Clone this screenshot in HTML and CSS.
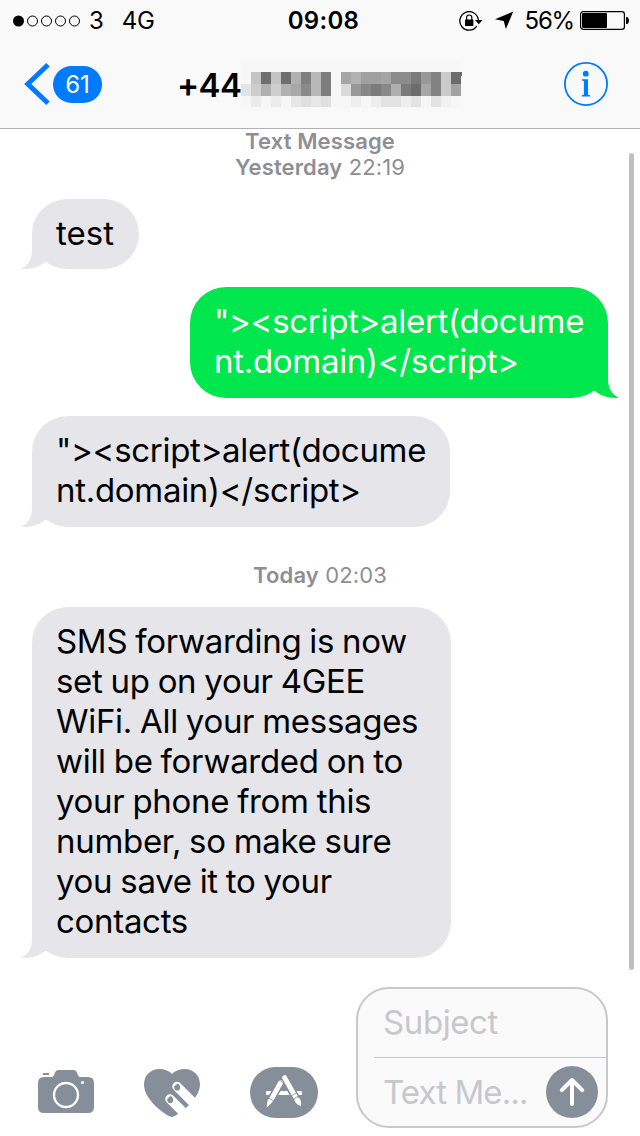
FILE: index.html
```
<!DOCTYPE html>
<html lang="en">
<head>
<meta charset="utf-8">
<title>Messages</title>
<link rel="stylesheet" href="styles.css">
</head>
<body>
<div class="phone">
  <header class="header">
    <div class="status">
      <div class="status-left">
        <svg class="signal" width="68" height="12" viewBox="0 0 68 12"><circle cx="5.5" cy="6" r="5.5"/><g fill="none" stroke="#000" stroke-width="1"><circle cx="19.5" cy="6" r="5"/><circle cx="33.5" cy="6" r="5"/><circle cx="47.5" cy="6" r="5"/><circle cx="61.5" cy="6" r="5"/></g></svg>
        <span class="carrier">3</span><span class="network">4G</span>
      </div>
      <div class="clock">09:08</div>
      <div class="status-right">
        <svg class="lock" width="24" height="20" viewBox="0 0 24 20"><path d="M17.800 15.200A9.300 9.300 0 1 1 19.400 9" fill="none" stroke="#000" stroke-width="1.300"/><path d="M16 9h7.500l-3.700 4.200z"/><rect x="6" y="8.500" width="8.400" height="6.500" rx=".6"/><path d="M7.600 9V6.600a2.600 2.600 0 0 1 5.200 0V9" fill="none" stroke="#000" stroke-width="1.200"/></svg>
        <svg class="location" width="19" height="19" viewBox="0 0 19 19"><path d="M18.300.500 0 8.300l8.700 1.600L10.900 18z"/></svg>
        <span class="percent">56%</span>
        <svg class="battery" width="49" height="20" viewBox="0 0 49 20"><rect x=".6" y=".6" width="43.800" height="17.800" rx="2.600" fill="none" stroke="#000" stroke-width="1.200"/><rect x="2" y="2" width="25" height="15" rx="1"/><path d="M46 6h1.200q1.800 1 1.800 3.500T47.200 13H46z"/></svg>
      </div>
    </div>
    <div class="nav">
      <div class="back">
        <svg width="26" height="42" viewBox="0 0 26 42"><path d="M24 1.800 3.800 21 24 40.200" fill="none" stroke="#007aff" stroke-width="5"/></svg>
        <span class="badge">61</span>
      </div>
      <div class="contact">
        <span class="number">+44</span>
        <svg class="mosaic" width="222" height="48" viewBox="0 0 222 48" shape-rendering="crispEdges">
          <path fill="#f7f7f7" d="M0 0h220v48H0z"/>
          <path fill="#e4e4e4" d="M0 24h10v12H0z"/>
          <path fill="#c4c4c4" d="M10 12h10v12H10zM30 12h10v12H30z"/><path fill="#cecece" d="M10 24h10v12H10zM30 24h10v12H30z"/><path fill="#ececec" d="M10 36h10v11H10zM30 36h10v11H30z"/>
          <path fill="#6e6e6e" d="M20 12h10v12H20zM40 12h10v12H40z"/><path fill="#b1b1b1" d="M20 24h10v12H20zM40 24h10v12H40zM50 12h10v12H50z"/>
          <path fill="#a8a8a8" d="M50 24h10v12H50z"/><path fill="#e7e7e7" d="M50 36h10v11H50zM70 36h10v11H70z"/>
          <path fill="#7f7f7f" d="M60 12h10v12H60z"/><path fill="#8a8a8a" d="M60 24h10v12H60z"/><path fill="#e0e0e0" d="M60 36h10v11H60zM80 36h10v11H80z"/>
          <path fill="#b8b8b8" d="M70 12h10v24H70z"/><path fill="#7d7d7d" d="M80 12h10v24H80z"/>
          <path fill="#a6a6a6" d="M100 12h10v12h-10z"/><path fill="#dadada" d="M100 24h10v12h-10z"/>
          <path fill="#b2b2b2" d="M110 12h10v12h-10z"/><path fill="#989898" d="M110 24h10v12h-10z"/><path fill="#eee" d="M110 36h10v11h-10zM130 36h10v11h-10zM160 36h10v11h-10z"/>
          <path fill="#a0a0a0" d="M120 12h20v12h-20z"/><path fill="#888" d="M120 24h10v12h-10zM140 24h10v12h-10z"/><path fill="#7b7b7b" d="M130 24h10v12h-10z"/>
          <path fill="#a5a5a5" d="M140 12h10v12h-10z"/><path fill="#e3e3e3" d="M140 36h20v11h-20zM170 36h10v11h-10zM190 36h10v11h-10z"/>
          <path fill="#8c8c8c" d="M150 12h20v12h-20z"/><path fill="#aeaeae" d="M150 24h10v12h-10z"/><path fill="#7a7a7a" d="M160 24h10v12h-10zM170 12h10v12h-10z"/>
          <path fill="#6c6c6c" d="M170 24h10v12h-10z"/><path fill="#989898" d="M180 12h10v12h-10z"/><path fill="#a6a6a6" d="M180 24h10v12h-10z"/>
          <path fill="#828282" d="M190 12h10v24h-10z"/><path fill="#cbcbcb" d="M200 12h10v24h-10z"/><path fill="#f1f1f1" d="M200 36h10v11h-10z"/>
          <path fill="#6c6c6c" d="M210 12h10v12h-10zM220 12h1v4h-1z"/><path fill="#a2a2a2" d="M210 24h10v12h-10z"/>
        </svg>
      </div>
      <svg class="info" width="44" height="44" viewBox="0 0 44 44"><circle cx="22" cy="22" r="21.100" fill="none" stroke="#007aff" stroke-width="1.800"/><g fill="#007aff"><circle cx="21.800" cy="11.700" r="2.900"/><path d="M17.900 17.200H24V32.800l2.200.500v1.200H17.700v-1.200l2.200-.500V18.900l-2-.500z"/></g></svg>
    </div>
  </header>

  <main class="thread">
    <div class="stamp stamp-first"><b class="label">Text Message</b><span class="when"><b>Yesterday</b> 22:19</span></div>
    <div class="bubble received short">test<svg class="tail" width="44" height="36" viewBox="0 0 44 36"><path d="M11 0v16C11 26 8 32 0 35.800 10 36.500 18 34 24 29L44 28V0z"/></svg></div>
    <div class="bubble sent code">"&gt;&lt;script&gt;alert(docume<br>nt.domain)&lt;/script&gt;<svg class="tail" width="44" height="36" viewBox="0 0 44 36"><path d="M11 0v16C11 26 8 32 0 35.800 10 36.500 18 34 24 29L44 28V0z"/></svg></div>
    <div class="bubble received code">"&gt;&lt;script&gt;alert(docume<br>nt.domain)&lt;/script&gt;<svg class="tail" width="44" height="36" viewBox="0 0 44 36"><path d="M11 0v16C11 26 8 32 0 35.800 10 36.500 18 34 24 29L44 28V0z"/></svg></div>
    <div class="stamp stamp-today"><span class="when"><b>Today</b> 02:03</span></div>
    <div class="bubble received long">SMS forwarding is now<br>set up on your 4GEE<br>WiFi. All your messages<br>will be forwarded on to<br>your phone from this<br>number, so make sure<br>you save it to your<br>contacts<svg class="tail" width="44" height="36" viewBox="0 0 44 36"><path d="M11 0v16C11 26 8 32 0 35.800 10 36.500 18 34 24 29L44 28V0z"/></svg></div>
    <div class="scrollbar"></div>
  </main>

  <footer class="composer">
    <div class="tools">
      <svg class="camera" width="56" height="44" viewBox="0 0 56 44"><path fill="#858e99" d="M5 3h6v2H5zM6 7h8c2 0 2.500-4 4-6q1-1 3-1h14q2 0 3 1c1.500 2 2 6 4 6h8q6 0 6 6v24q0 6-6 6H6q-6 0-6-6V13q0-6 6-6z"/><circle cx="28" cy="25" r="12" fill="none" stroke="#fff" stroke-width="2.400"/><circle cx="44.500" cy="12.500" r="1.600" fill="#fff"/></svg>
      <svg class="heart" width="56" height="49" viewBox="0 0 56 49"><path fill="#858e99" d="M28 5C31 1.500 36 0 40.500 0 50 0 56 7 56 15.500 56 31 32 48 28 48S0 32 0 15.500C0 7 6 0 15.500 0 20 0 25 1.500 28 5z"/><path d="m33 17.500 25 25M26 30l25 25" stroke="#fff" stroke-width="9.500" stroke-linecap="round"/><path fill="#858e99" d="m30.300 17.200 3.200-2.800q3 1.500 2.800 4.600-.5 3-3.300 2.600-3.200-.6-2.700-4.400zM23.300 29.700l3.200-2.800q3 1.500 2.800 4.600-.5 3-3.300 2.600-3.200-.6-2.700-4.400z"/></svg>
      <svg width="68" height="51" viewBox="0 0 68 51"><rect width="68" height="51" rx="25.500" fill="#858e99"/><path fill="#fff" d="M16 24h36v4H16z"/><path d="m30.500 16-12 21M35 12l14.500 25" stroke="#858e99" stroke-width="8"/><path d="m30.700 15.500-9.200 16.500M34.500 10.500 45.500 30" stroke="#fff" stroke-width="4.800" stroke-linecap="round"/><path fill="#fff" d="m18 32 4.800 2.500L17.500 40q-1 0-.8-1.500zM44.300 33l4.700-2.500c2 3 2.500 5 2 8.500-3-1-5.700-2.500-6.700-6z"/><path d="m28 12.500 5 3M18.500 31l5 3M42 28.500l5-3M43.500 32l5-3" stroke="#858e99" stroke-width=".8"/></svg>
    </div>
    <div class="field">
      <div class="subject">Subject</div>
      <div class="message"><span>Text Me...</span><svg class="send" width="52" height="52" viewBox="0 0 52 52"><circle cx="26" cy="26" r="26" fill="#858e99"/><path d="M26 38V14M15.800 24.200 26 14l10.200 10.200" fill="none" stroke="#fff" stroke-width="4" stroke-linecap="round" stroke-linejoin="round"/></svg></div>
    </div>
  </footer>
</div>
</body>
</html>
```
FILE: styles.css
```
* { box-sizing: border-box; }
body { margin: 0; background: #fff; font-family: Inter, "Liberation Sans", sans-serif; color: #000; }
svg { display: block; flex: none; }
.phone { width: 640px; height: 1136px; display: flex; flex-direction: column; overflow: hidden; white-space: nowrap; }
.header { height: 129px; flex: none; background: #f9f9f9; border-bottom: 1px solid #b2b2b2; }
.status { height: 40px; display: grid; grid-template-columns: 1fr auto 1fr; align-items: center; padding: 1px 11px 0 13px; font-size: 24px; line-height: 39px; }
.status-left, .status-right { display: flex; align-items: center; }
.status-right { justify-content: flex-end; }
.carrier { margin-left: 8px; }
.network { margin-left: 18px; letter-spacing: -.4px; }
.clock { font-weight: 600; letter-spacing: .3px; padding-left: 5px; }
.lock { margin-right: 12px; }
.location { margin-right: 11px; }
.percent { margin-right: 6px; letter-spacing: -1.2px; }
.nav { height: 88px; display: grid; grid-template-columns: 153px 1fr 44px; padding: 0 32px 0 24px; align-items: center; }
.back { display: flex; align-items: center; gap: 3px; }
.badge { width: 49px; height: 37px; border-radius: 18.5px; background: #007aff; color: #fff; font-size: 24px; line-height: 37px; text-align: center; }
.contact { display: flex; align-items: center; }
.number { width: 64px; font-size: 33px; font-weight: 600; line-height: 48px; letter-spacing: -.6px; padding-top: 1px; }

.thread { flex: none; height: 842px; position: relative; display: flex; flex-direction: column; align-items: flex-start; padding: 0 32px; }
.stamp, .bubble { flex: none; }
.stamp { width: 100%; display: flex; flex-direction: column; align-items: center; color: #8e8e93; font-size: 22px; line-height: 26px; letter-spacing: .12px; }
.stamp b { font-weight: 600; }
.stamp-first { height: 71px; margin-top: -1px; }
.stamp-today { height: 62px; padding-top: 17px; }
.bubble { position: relative; padding: 14px 24px 16px; border-radius: 36px; font-size: 33px; line-height: 40px; letter-spacing: -.3px; word-spacing: -1px; }
.received { background: #e5e5ea; fill: #e5e5ea; }
.sent { align-self: flex-end; background: #00e64d; fill: #00e64d; color: #fff; }
.short { width: 107px; height: 70px; margin-bottom: 18px; letter-spacing: 0; }
.code { width: 418px; height: 111px; margin-bottom: 18px; }
.long { width: 419px; height: 351px; }
.tail { position: absolute; left: -11px; bottom: 0; z-index: -1; }
.sent .tail { left: auto; right: -11px; transform: scaleX(-1); }
.short .tail { height: 36px; }
.scrollbar { position: absolute; right: 6px; top: 24px; width: 5px; height: 817px; border-radius: 3px; background: #bfbfbf; }

.composer { flex: 1; display: flex; justify-content: space-between; padding: 16px 32px 8px 38px; }
.tools { display: flex; align-items: flex-start; gap: 50px; padding-top: 80px; }
.camera { margin-top: 3px; }
.heart { margin-top: 2px; }
.field { width: 252px; height: 141px; border: 2px solid #c7c7cc; border-radius: 33px; background: #fafafa; color: #c7c7cc; font-size: 33px; letter-spacing: -.4px; padding-left: 16px; }
.subject { height: 69px; line-height: 67px; padding-left: 9px; border-bottom: 1px solid #c7c7cc; }
.message { height: 68px; display: flex; align-items: center; justify-content: space-between; padding: 0 8px 0 9px; letter-spacing: -.9px; }
```
